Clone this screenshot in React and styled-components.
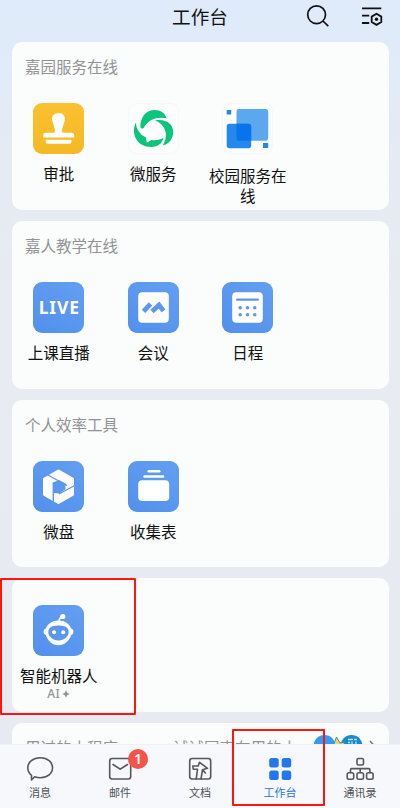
import React from 'react';
import styled, { createGlobalStyle } from 'styled-components';

const Global = createGlobalStyle`
  * { box-sizing: border-box; }
  body { margin: 0; font-family: "Noto Sans CJK SC", sans-serif; color: #111; }
  svg { display: block; flex: none; }
`;

const Page = styled.div`
  position: relative;
  width: 400px;
  height: 808px;
  overflow: hidden;
  display: flex;
  flex-direction: column;
  background: linear-gradient(#dfeafa 0, #e0ebfa 50px, #e5eaf3 150px, #e8ebf1 300px, #e7eaf1 100%);
`;

const Header = styled.header`
  height: 42px;
  flex: none;
  display: grid;
  grid-template-columns: 1fr auto 1fr;
  align-items: center;
  padding: 0 17px 10px;
`;

const Title = styled.h1`
  grid-column: 2;
  margin: 0;
  font-size: 18.6px;
  line-height: 28px;
  font-weight: 400;
`;

const Actions = styled.div`
  display: flex;
  justify-content: flex-end;
  gap: 31px;
`;

const Main = styled.main`
  flex: 1;
  min-height: 0;
  overflow: hidden;
  display: flex;
  flex-direction: column;
  gap: 11px;
  padding: 0 11px 0 12px;
`;

const Card = styled.section`
  flex: none;
  height: ${(p) => p.$height}px;
  padding: ${(p) => (p.$untitled ? 27 : 13)}px 0 0;
  border-radius: 10px;
  background: #fbfcfc;
`;

const CardTitle = styled.h2`
  margin: 0 0 26px 13px;
  font-size: 15.5px;
  line-height: 22px;
  font-weight: 400;
  color: #929394;
`;

const AppGrid = styled.div`
  display: grid;
  grid-template-columns: repeat(3, 94.5px);
`;

const AppItem = styled.div`
  display: flex;
  flex-direction: column;
  align-items: center;
  margin-left: -1px;
`;

const Tile = styled.div`
  width: 51px;
  height: 51px;
  flex: none;
  display: grid;
  place-items: center;
  border-radius: 9px;
  box-shadow: ${(p) => (p.$tone === 'plain' ? 'inset 0 0 0 1px #f6f7f7' : 'none')};
  background: ${(p) => ({
    gold: 'linear-gradient(#fac02d, #f5b928)',
    blue: 'linear-gradient(35deg, #5290ed, #639ff0)',
    plain: '#fcfdfd',
  })[p.$tone]};
`;

const Live = styled.span`
  font: 700 17.5px/24px "Noto Sans", sans-serif;
  letter-spacing: 0.8px;
  margin: 0 0 2px 1px;
  color: #fff;
`;

const AppLabel = styled.div`
  width: 82px;
  margin-top: ${(p) => p.$gap}px;
  font-size: 15.5px;
  line-height: 20px;
  text-align: center;
`;

const AiTag = styled.div`
  display: flex;
  align-items: center;
  gap: 2px;
  margin-top: 2px;
  font: 500 12px/14px "Noto Sans", sans-serif;
  letter-spacing: 0.5px;
  color: #929394;
`;

const PeekRow = styled.div`
  display: flex;
  align-items: center;
  height: 22px;
  margin: 0 12px 0 13px;
  font-size: 15.5px;
  color: #929394;
`;

const PeekNote = styled.span`
  margin-left: auto;
  margin-right: 17px;
  white-space: nowrap;
`;

const TabBar = styled.nav`
  flex: none;
  height: 64px;
  display: grid;
  grid-template-columns: repeat(5, 80px);
  background: #f6f8fb;
  border-top: 1px solid #eef2f5;
`;

const Tab = styled.div`
  display: flex;
  flex-direction: column;
  align-items: center;
  padding-top: 10px;
  font-size: 11px;
  line-height: 16px;
  color: ${(p) => (p.$active ? '#2476dc' : '#4d5054')};
`;

const TabIcon = styled.div`
  position: relative;
  height: 28px;
  margin-bottom: 1px;
`;

const Badge = styled.span`
  position: absolute;
  left: 22px;
  top: -6px;
  width: 20px;
  height: 20px;
  border-radius: 50%;
  background: #f65349;
  color: #fff;
  font: 600 14px/20px "Noto Sans", sans-serif;
  text-align: center;
`;

const Highlight = styled.div`
  position: absolute;
  left: ${(p) => p.$x}px;
  top: ${(p) => p.$y}px;
  width: ${(p) => p.$w}px;
  height: ${(p) => p.$h}px;
  border: 2px solid #fc160d;
  border-radius: 1px;
`;

const SearchIcon = () => (
  <svg width="24" height="24" viewBox="0 0 24 24" fill="none" stroke="#111" strokeWidth="1.7">
    <circle cx="10.6" cy="10.7" r="8.9" /><path d="m16.9 17 5.4 5.2" />
  </svg>
);

const SettingsIcon = () => (
  <svg width="22" height="24" viewBox="0 0 22 24" fill="none" stroke="#111" strokeWidth="1.8">
    <path d="M1 4.4h19.3M1 11.6h7.2M1 19h7.2M15.500 9.800l4.800 2.800v5.500l-4.800 2.800-4.800-2.800v-5.500z" />
    <circle cx="15.500" cy="15.300" r="1.700" fill="#111" stroke="none" />
  </svg>
);

const StampIcon = () => (
  <svg width="51" height="51" viewBox="0 0 51 51" fill="#fff">
    <path d="M25.500 10c-4.200 0-7 3-6.400 7l2.800 9.500c.5 2-.3 3.300-2 3.300h-7.600c-1.400 0-2.100 1-2.100 2.300v2.500h31v-2.500c0-1.300-1-2.300-2.300-2.300h-7.800c-1.700 0-2.500-1.300-2-3.300l2.800-9.500c.6-4-2.200-7-6.400-7z" />
    <path d="M12.700 36.800h25.800V39q0 1.800-2 1.800H14.700q-2 0-2-1.800z" />
  </svg>
);

const ServiceIcon = () => (
  <svg width="51" height="51" viewBox="0 0 51 51" fill="#0ac57a">
    <path d="M12.300 24C12.300 14 18 7 27 7c5.500 0 9.800 3 11.700 8.300C29 13.300 20.500 16 15.700 25q-2.200 1.500-3.400-1z" />
    <path d="M27 17.500c11-2 18.200 3.500 18.200 11.500 0 6.500-4 12-10.500 13.500C41 33 38 21.500 27 17.500z" />
    <path d="M7.800 19.500C2.500 31 9 44 23.500 44c6.500 0 10.500-3.500 12-9-4 2-8 2.500-12 2l-4.800 2.700-.7-5.200c-6-3-9.700-8-10.200-15z" />
  </svg>
);

const CampusIcon = () => (
  <svg width="51" height="51" viewBox="0 0 51 51">
    <rect x="14.500" y="6" width="31.700" height="31.700" rx="2.700" fill="#5ba8ef" />
    <rect x="4.700" y="20.800" width="24.500" height="24.500" rx="2.700" fill="#2488ee" />
    <path d="M14.500 20.800h12q2.700 0 2.700 2.700v14.200h-12q-2.700 0-2.700-2.700z" fill="#0873eb" />
    <path d="M4.700 7h4.500v4.500H4.700zM41 40h5.200v5H41z" fill="#2488e6" />
  </svg>
);

const MeetingIcon = () => (
  <svg width="51" height="51" viewBox="0 0 51 51">
    <rect x="10.200" y="10.200" width="30.600" height="30.600" rx="4" fill="#fff" />
    <path d="m15.500 29.300 7-7.500M24 29.500l7-6.500 4.500 6" fill="none" stroke="#5d98ed" strokeWidth="4.800" />
  </svg>
);

const CalendarIcon = () => (
  <svg width="51" height="51" viewBox="0 0 51 51" fill="#5d98ed">
    <rect x="10.200" y="10.200" width="30.600" height="30.600" rx="4" fill="#fff" />
    <rect x="14" y="16.600" width="23" height="2.200" rx="1" />
    {[18.2, 25.5, 32.8].map((x) => <g key={x}><circle cx={x} cy="25.700" r="1.800" /><circle cx={x} cy="32.800" r="1.800" /></g>)}
  </svg>
);

const DriveIcon = () => (
  <svg width="51" height="51" viewBox="0 0 51 51">
    <path d="m25.500 10 14 8v15.500l-14 8-14-8V18z" fill="#fff" stroke="#fff" strokeWidth="3" strokeLinejoin="round" />
    <path d="M20 21.500 26 19l6.500 3.500v5.800l-6 4.200-6.500-.5z" fill="#5c97ed" />
    <path d="m14 13.500 20 11M20.300 44V21.500M26 33l16.500-9" fill="none" stroke="#5c97ed" strokeWidth="1.400" />
  </svg>
);

const CollectIcon = () => (
  <svg width="51" height="51" viewBox="0 0 51 51" fill="#fff">
    <rect x="19.500" y="9" width="13" height="2.500" rx="1.200" /><rect x="15.300" y="14.300" width="21" height="2.500" rx="1.200" />
    <rect x="10.200" y="19.300" width="31" height="20.700" rx="4" />
  </svg>
);

const RobotIcon = () => (
  <svg width="51" height="51" viewBox="0 0 51 51">
    <path d="M26 17c0-3.500 1-4.700 3.500-5.500" fill="none" stroke="#fff" strokeWidth="1.700" />
    <circle cx="29.800" cy="11.500" r="2.600" fill="#fff" />
    <path d="M25.500 15.500c-6.500 0-10.700 3.300-12.700 8-3 1-3 5.600 0 6.600 2 5.600 6.200 10.200 12.700 10.200s10.700-4.600 12.700-10.200c3-1 3-5.600 0-6.600-2-4.700-6.200-8-12.700-8z" fill="#fff" />
    <path d="M19.500 21.300q6-1.500 12 0c4.500 1.500 5.500 7 2.500 10.300-4 5.200-13 5.200-17 0-3-3.300-2-8.800 2.500-10.300z" fill="#5c97ed" />
    <circle cx="21" cy="27.300" r="2" fill="#fff" /><circle cx="30.200" cy="27.300" r="2" fill="#fff" />
  </svg>
);

const Sparkle = () => (
  <svg width="8" height="8" viewBox="0 0 8 8" fill="#929394"><path d="M4 .3 5.200 2.800 7.700 4 5.200 5.200 4 7.700 2.800 5.200.3 4l2.500-1.200z" /></svg>
);

const MiniApps = () => (
  <svg width="63" height="26" viewBox="0 0 63 26">
    <circle cx="10.500" cy="12" r="11" fill="#309cf3" />
    <circle cx="37.500" cy="12" r="11" fill="#168bd0" />
    <path d="m22.500 3 3.500 6 5-1-3 6 1 6-6-4-6 3 2.500-8z" fill="#fbd455" stroke="#328bc2" />
    <path d="M34 5.500h5M40 5.500h3M34 8.500h2m2-1v4m4-4v4M33 11h3" stroke="#bbe2f5" strokeWidth="1.300" />
    <path d="m56 7 5 5.500-5 5.500" fill="none" stroke="#777" strokeWidth="1.500" />
  </svg>
);

const tabProps = { width: 28, height: 28, viewBox: '0 0 28 28', fill: 'none', stroke: '#55585b', strokeWidth: 1.6, strokeLinejoin: 'round', strokeLinecap: 'round' };
const ChatIcon = () => (
  <svg {...tabProps}><path d="M14.300 2.800c7.200 0 12.200 4.300 12.200 10s-5 10-12.200 10c-2 0-4-.4-5.700-1.100L5.500 25v-4.700C3 18.400 1.800 15.800 1.800 12.800c0-5.700 5.300-10 12.500-10z" /></svg>
);
const MailIcon = () => (
  <svg {...tabProps}><rect x="3.700" y="3.500" width="21" height="20.500" rx="2.500" /><path d="m7 9.500 7.200 4.700 7.300-4.700" /></svg>
);
const DocIcon = () => (
  <svg {...tabProps}><rect x="3.700" y="3.500" width="21" height="20.500" rx="2.500" /><path d="M11.500 14.300H7.300L6.800 11h5.400l1.300-3.700 8 6-4.800 1.400 2.600 3.300M11.500 14.300 10.200 24M16.500 14.700 15 24" /></svg>
);
const WorkIcon = () => (
  <svg width="28" height="28" viewBox="0 0 28 28" fill="#2476ea"><rect x="3.200" y="3" width="9.500" height="9.500" rx="2.500" /><rect x="15.700" y="3" width="9.500" height="9.500" rx="2.500" /><rect x="3.200" y="15.500" width="9.500" height="9.500" rx="2.500" /><rect x="15.700" y="15.500" width="9.500" height="9.500" rx="2.500" /></svg>
);
const ContactsIcon = () => (
  <svg {...tabProps}><rect x="11" y="3.500" width="6.500" height="6.500" rx="1.500" /><path d="M4.500 17.500v-2.700q0-1.200 1.200-1.200h17q1.200 0 1.200 1.200v2.700M14.200 13.600v4" /><rect x="1.200" y="17.800" width="6.500" height="6.500" rx="1.700" /><rect x="11" y="17.800" width="6.500" height="6.500" rx="1.700" /><rect x="20.600" y="17.800" width="6.500" height="6.500" rx="1.700" /></svg>
);

const groups = [
  { title: '嘉园服务在线', height: 168, apps: [
    { name: '审批', tone: 'gold', icon: <StampIcon /> },
    { name: '微服务', tone: 'plain', icon: <ServiceIcon /> },
    { name: '校园服务在线', tone: 'plain', icon: <CampusIcon />, gap: 11 },
  ] },
  { title: '嘉人教学在线', height: 168, apps: [
    { name: '上课直播', icon: <Live>LIVE</Live> },
    { name: '会议', icon: <MeetingIcon /> },
    { name: '日程', icon: <CalendarIcon /> },
  ] },
  { title: '个人效率工具', height: 167, apps: [
    { name: '微盘', icon: <DriveIcon /> },
    { name: '收集表', icon: <CollectIcon /> },
  ] },
  { height: 134, apps: [{ name: '智能机器人', icon: <RobotIcon />, ai: true }] },
];

const tabs = [
  { name: '消息', icon: <ChatIcon /> },
  { name: '邮件', icon: <MailIcon />, badge: 1 },
  { name: '文档', icon: <DocIcon /> },
  { name: '工作台', icon: <WorkIcon />, active: true },
  { name: '通讯录', icon: <ContactsIcon /> },
];

export default function App() {
  return (
    <>
      <Global />
      <Page>
        <Header><Title>工作台</Title><Actions><SearchIcon /><SettingsIcon /></Actions></Header>
        <Main>
          {groups.map((g) => (
            <Card key={g.height + (g.title || '')} $height={g.height} $untitled={!g.title}>
              {g.title && <CardTitle>{g.title}</CardTitle>}
              <AppGrid>
                {g.apps.map((a) => (
                  <AppItem key={a.name}>
                    <Tile $tone={a.tone || 'blue'}>{a.icon}</Tile>
                    <AppLabel $gap={a.gap || 9}>{a.name}</AppLabel>
                    {a.ai && <AiTag>AI<Sparkle /></AiTag>}
                  </AppItem>
                ))}
              </AppGrid>
            </Card>
          ))}
          <Card $height={60}>
            <PeekRow><span>用过的小程序</span><PeekNote>试试同事在用的小</PeekNote><MiniApps /></PeekRow>
          </Card>
        </Main>
        <TabBar>
          {tabs.map((t) => (
            <Tab key={t.name} $active={t.active}>
              <TabIcon>{t.icon}{t.badge && <Badge>{t.badge}</Badge>}</TabIcon>
              {t.name}
            </Tab>
          ))}
        </TabBar>
        <Highlight $x={0} $y={578} $w={136} $h={137} />
        <Highlight $x={232} $y={729} $w={93} $h={77} />
      </Page>
    </>
  );
}
